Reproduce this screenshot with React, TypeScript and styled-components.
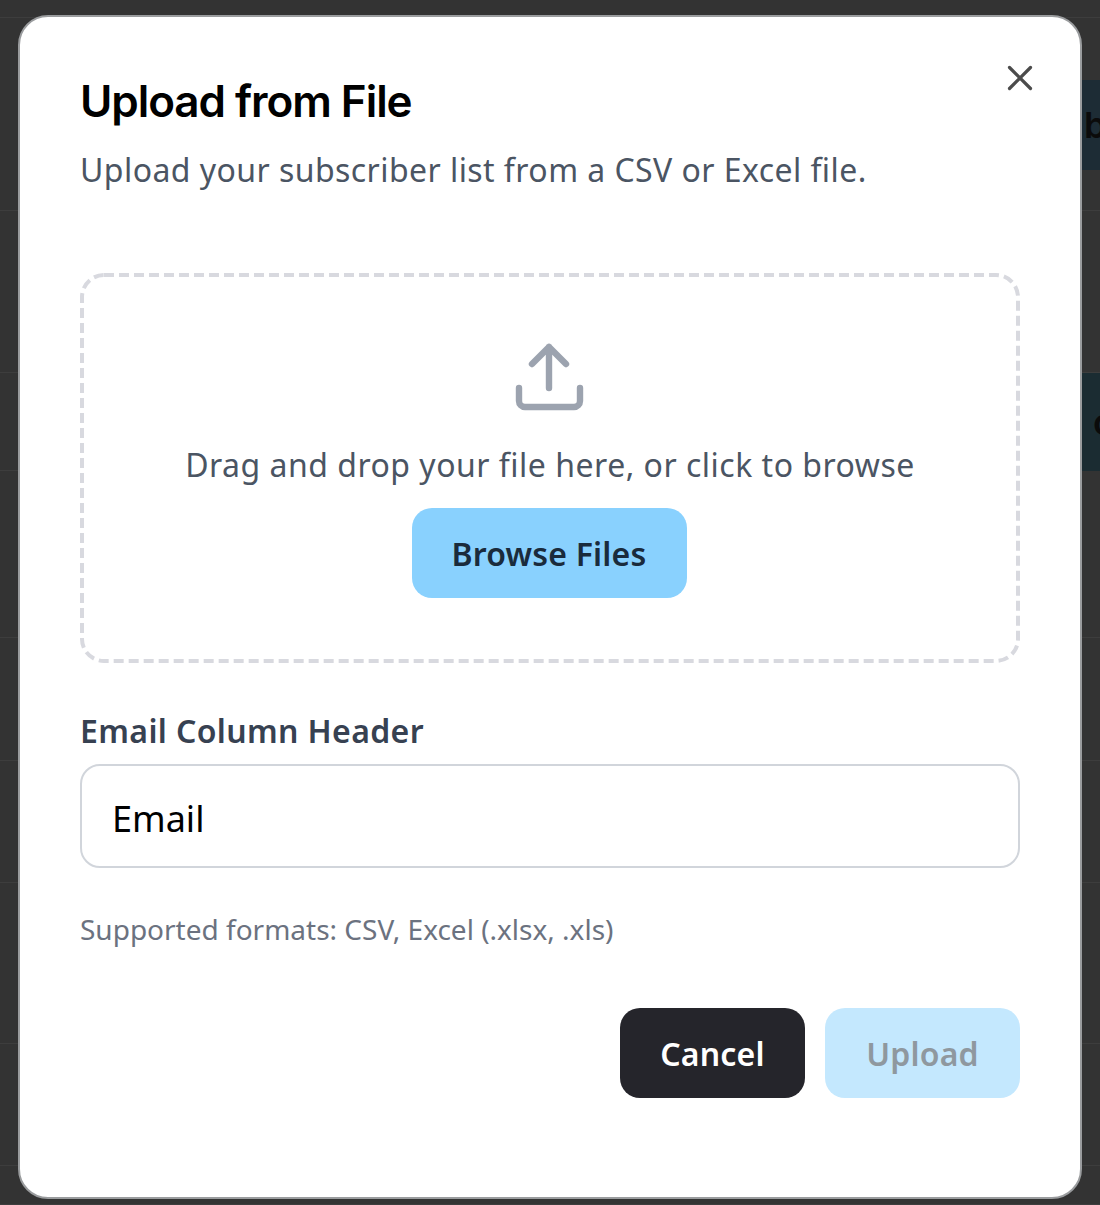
import styled, { createGlobalStyle } from "styled-components";

const Global = createGlobalStyle`
  html, body { margin: 0; padding: 0; background: #333333; }
  * { box-sizing: border-box; }
`;

const Page = styled.div`
  position: relative;
  width: 1100px;
  height: 1205px;
  overflow: hidden;
  background: #333333;
  font-family: "Noto Sans", sans-serif;
`;

const Table = styled.div`
  display: flex;
  flex-direction: column;
  width: 100%;
`;

const Row = styled.div<{ $h: number }>`
  height: ${(p) => p.$h}px;
  border-bottom: 1px solid #3d3d3d;
  display: flex;
  justify-content: flex-end;
  align-items: flex-start;
`;

const Chip = styled.div<{ $h: number; $top: number; $pad: number; $bg: string }>`
  width: 60px;
  height: ${(p) => p.$h}px;
  margin-top: ${(p) => p.$top}px;
  background: ${(p) => p.$bg};
  color: #0b0b0b;
  font-family: "Inter", sans-serif;
  font-weight: 600;
  font-size: 36px;
  line-height: ${(p) => p.$h}px;
  padding-left: ${(p) => p.$pad}px;
  overflow: hidden;
`;

const Modal = styled.div`
  position: absolute;
  left: 18px;
  top: 15px;
  width: 1064px;
  height: 1184px;
  background: #ffffff;
  border: 2px solid #9a9c9e;
  border-radius: 30px;
  padding: 59px 60px 0;
  display: flex;
  flex-direction: column;
`;

const Close = styled.button`
  position: absolute;
  top: 47px;
  right: 46px;
  width: 28px;
  height: 28px;
  padding: 0;
  border: 0;
  background: none;
  color: #4b4b4b;
  display: flex;
`;

const Title = styled.h2`
  margin: 0;
  font-family: "Inter", sans-serif;
  font-weight: 600;
  font-size: 44px;
  line-height: 50px;
  letter-spacing: -1.05px;
  color: #000;
`;

const Subtitle = styled.p`
  margin: 20px 0 0;
  font-size: 32px;
  line-height: 48px;
  letter-spacing: 0.44px;
  color: #4b5563;
`;

const Drop = styled.div`
  position: relative;
  margin-top: 79px;
  height: 390px;
  display: flex;
  flex-direction: column;
  align-items: center;
  padding-top: 69px;
`;

/* css dashed borders can't do the 10/5 dash of the original, so it's drawn */
const DashOutline = styled.svg`
  position: absolute;
  inset: 0;
  width: 100%;
  height: 100%;
  fill: none;
  stroke: #d8d9df;
  stroke-width: 4;
  stroke-dasharray: 10 5;
`;

const UploadIcon = styled.svg`
  width: 72px;
  height: 72px;
  margin-right: 2px;
  fill: none;
  stroke: #9ca3af;
  stroke-width: 6.4;
  stroke-linecap: round;
  stroke-linejoin: round;
`;

const DropText = styled.p`
  margin: 27px 0 0;
  font-size: 32px;
  line-height: 48px;
  letter-spacing: 0.5px;
  color: #4b5563;
`;

const Button = styled.button<{ $bg: string; $fg: string; $w: number }>`
  width: ${(p) => p.$w}px;
  height: 90px;
  border: 0;
  border-radius: 20px;
  background: ${(p) => p.$bg};
  color: ${(p) => p.$fg};
  font-family: inherit;
  font-size: 32px;
  font-weight: 600;
  letter-spacing: 0.2px;
  padding: 0;
`;

const Browse = styled(Button)`
  margin: 19px 2px 0 0;
`;

const Label = styled.label`
  margin-top: 44px;
  font-size: 32px;
  line-height: 48px;
  font-weight: 600;
  letter-spacing: 0.36px;
  color: #374151;
`;

const Input = styled.input`
  margin-top: 9px;
  height: 104px;
  width: 100%;
  border: 2px solid #d1d5db;
  border-radius: 20px;
  padding: 4px 30px 0;
  font-family: inherit;
  font-size: 36px;
  color: #000;
  outline: none;
`;

const Hint = styled.p`
  margin: 36px 0 0;
  font-size: 28px;
  line-height: 50px;
  color: #6b7280;
`;

const Actions = styled.div`
  margin-top: 54px;
  display: flex;
  justify-content: flex-end;
  gap: 20px;
`;

const rows = [
  { h: 18 },
  { h: 193, chip: 90, top: 62, pad: 44, bg: "#1d2c35", text: "b" },
  { h: 162 },
  { h: 98, chip: 98, top: 0, pad: 53, bg: "#1b2c32", text: "c" },
  { h: 167 },
  { h: 123 },
  { h: 122 },
  { h: 161 },
  { h: 122 },
  { h: 39 },
];

export default function App() {
  return (
    <Page>
      <Global />
      <Table>
        {rows.map((r, i) => (
          <Row key={i} $h={r.h}>
            {r.chip && (
              <Chip $h={r.chip} $top={r.top} $pad={r.pad} $bg={r.bg}>
                {r.text}
              </Chip>
            )}
          </Row>
        ))}
      </Table>
      <Modal>
        <Close aria-label="Close">
          <svg width="28" height="28" viewBox="0 0 28 28" fill="none" stroke="currentColor" strokeWidth="3.2" strokeLinecap="round">
            <path d="M3.5 3.5l21 21M24.5 3.5l-21 21" />
          </svg>
        </Close>
        <Title>Upload from File</Title>
        <Subtitle>Upload your subscriber list from a CSV or Excel file.</Subtitle>
        <Drop>
          <DashOutline viewBox="0 0 940 390">
            <rect x="2" y="2" width="936" height="386" rx="22" />
          </DashOutline>
          <UploadIcon viewBox="0 0 72 72">
            <path d="M36 46V5M19 22L36 5l17 17M6 46v13a6 6 0 0 0 6 6h49a6 6 0 0 0 6-6V46" />
          </UploadIcon>
          <DropText>Drag and drop your file here, or click to browse</DropText>
          <Browse $w={275} $bg="#89d1fe" $fg="#1a2b3c">Browse Files</Browse>
        </Drop>
        <Label>Email Column Header</Label>
        <Input defaultValue="Email" />
        <Hint>Supported formats: CSV, Excel (.xlsx, .xls)</Hint>
        <Actions>
          <Button $w={185} $bg="#25252b" $fg="#fff">Cancel</Button>
          <Button $w={195} $bg="#c4e8fe" $fg="#8f989f">Upload</Button>
        </Actions>
      </Modal>
    </Page>
  );
}
